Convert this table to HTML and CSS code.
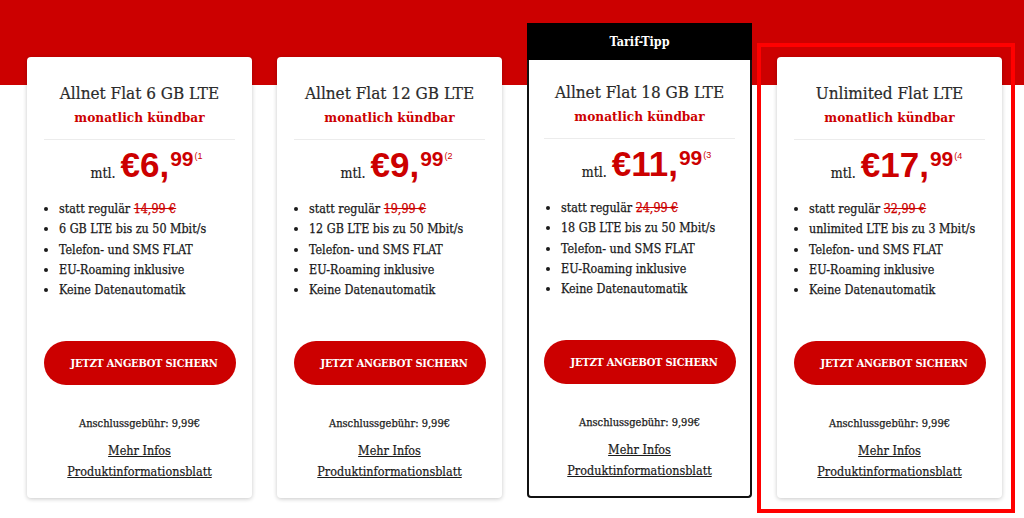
FILE: index.html
```html
<!DOCTYPE html>
<html lang="de">
<head>
<meta charset="utf-8">
<title>Tarife</title>
<link rel="stylesheet" href="styles.css">
</head>
<body>
<div class="page">
  <div class="row">
    <div class="col">
      <div class="card">
        <h2 class="title">Allnet Flat 6 GB LTE</h2>
        <div class="sub">monatlich kündbar</div>
        <div class="sep"></div>
        <div class="price"><span class="mtl">mtl.</span><span class="big">€6,</span><span class="cents">99</span><span class="note">(1</span></div>
        <ul class="feat">
          <li>statt regulär <s>14,99 €</s></li>
          <li>6 GB LTE bis zu 50 Mbit/s</li>
          <li>Telefon- und SMS FLAT</li>
          <li>EU-Roaming inklusive</li>
          <li>Keine Datenautomatik</li>
        </ul>
        <a class="btn">JETZT ANGEBOT SICHERN</a>
        <div class="fee">Anschlussgebühr: 9,99€</div>
        <a class="link link-first">Mehr Infos</a>
        <a class="link">Produktinformationsblatt</a>
      </div>
    </div>
    <div class="col">
      <div class="card">
        <h2 class="title">Allnet Flat 12 GB LTE</h2>
        <div class="sub">monatlich kündbar</div>
        <div class="sep"></div>
        <div class="price"><span class="mtl">mtl.</span><span class="big">€9,</span><span class="cents">99</span><span class="note">(2</span></div>
        <ul class="feat">
          <li>statt regulär <s>19,99 €</s></li>
          <li>12 GB LTE bis zu 50 Mbit/s</li>
          <li>Telefon- und SMS FLAT</li>
          <li>EU-Roaming inklusive</li>
          <li>Keine Datenautomatik</li>
        </ul>
        <a class="btn">JETZT ANGEBOT SICHERN</a>
        <div class="fee">Anschlussgebühr: 9,99€</div>
        <a class="link link-first">Mehr Infos</a>
        <a class="link">Produktinformationsblatt</a>
      </div>
    </div>
    <div class="col">
      <div class="tip">Tarif-Tipp</div>
      <div class="card card-tip">
        <h2 class="title">Allnet Flat 18 GB LTE</h2>
        <div class="sub">monatlich kündbar</div>
        <div class="sep"></div>
        <div class="price"><span class="mtl">mtl.</span><span class="big">€11,</span><span class="cents">99</span><span class="note">(3</span></div>
        <ul class="feat">
          <li>statt regulär <s>24,99 €</s></li>
          <li>18 GB LTE bis zu 50 Mbit/s</li>
          <li>Telefon- und SMS FLAT</li>
          <li>EU-Roaming inklusive</li>
          <li>Keine Datenautomatik</li>
        </ul>
        <a class="btn">JETZT ANGEBOT SICHERN</a>
        <div class="fee">Anschlussgebühr: 9,99€</div>
        <a class="link link-first">Mehr Infos</a>
        <a class="link">Produktinformationsblatt</a>
      </div>
    </div>
    <div class="col col-marked">
      <div class="card">
        <h2 class="title">Unlimited Flat LTE</h2>
        <div class="sub">monatlich kündbar</div>
        <div class="sep"></div>
        <div class="price"><span class="mtl">mtl.</span><span class="big">€17,</span><span class="cents">99</span><span class="note">(4</span></div>
        <ul class="feat">
          <li>statt regulär <s>32,99 €</s></li>
          <li>unlimited LTE bis zu 3 Mbit/s</li>
          <li>Telefon- und SMS FLAT</li>
          <li>EU-Roaming inklusive</li>
          <li>Keine Datenautomatik</li>
        </ul>
        <a class="btn">JETZT ANGEBOT SICHERN</a>
        <div class="fee">Anschlussgebühr: 9,99€</div>
        <a class="link link-first">Mehr Infos</a>
        <a class="link">Produktinformationsblatt</a>
      </div>
    </div>
  </div>
</div>
</body>
</html>
```

FILE: styles.css
```css
* { box-sizing: border-box; }
html, body { margin: 0; padding: 0; }
body {
  width: 1024px;
  height: 518px;
  overflow: hidden;
  background: linear-gradient(#cc0000 0, #cc0000 85px, #ffffff 85px);
  font-family: "DejaVu Serif Condensed", "Liberation Serif", serif;
  color: #222;
}
.page { padding: 23px 0 0 27px; }
.row {
  display: flex;
  align-items: flex-end;
  gap: 25px;
  height: 475px;
}
.col {
  width: 225px;
  display: flex;
  flex-direction: column;
  position: relative;
}
.col-marked::after {
  content: "";
  position: absolute;
  left: -20px; right: -13px; top: -14px; bottom: -15px;
  border: 4px solid #ff0000;
  pointer-events: none;
}
.card {
  height: 441px;
  background: #fff;
  border-radius: 4px;
  box-shadow: 0 1px 4px rgba(0,0,0,0.22);
  display: flex;
  flex-direction: column;
  align-items: center;
  padding: 24px 16px 0;
}
.card-tip {
  height: 438px;
  border: 2px solid #111;
  border-top: none;
  border-radius: 0 0 4px 4px;
  padding-top: 20px;
  box-shadow: none;
}
.tip {
  height: 37px;
  background: #000;
  color: #fff;
  font-weight: bold;
  font-size: 12.5px;
  display: flex;
  align-items: center;
  justify-content: center;
}
.title {
  margin: 0;
  font-size: 17px;
  font-weight: normal;
  line-height: 24px;
  color: #2b2b2b;
  white-space: nowrap;
  -webkit-text-stroke: 0.2px #2b2b2b;
}
.sub {
  font-size: 13.5px;
  font-weight: bold;
  line-height: 24px;
  color: #cc0000;
}
.sep {
  width: 191px;
  height: 1px;
  background: #ececec;
  margin-top: 10px;
}
.price {
  display: flex;
  align-items: flex-start;
  height: 46px;
  margin-top: 5px;
  margin-left: 14px;
  color: #cc0000;
  font-family: "Liberation Sans", Arial, sans-serif;
  font-weight: bold;
}
.mtl {
  font-family: "DejaVu Serif Condensed", "Liberation Serif", serif;
  font-weight: normal;
  color: #1a1a1a;
  font-size: 14px;
  line-height: 16px;
  margin-top: 20px;
  margin-right: 5px;
  -webkit-text-stroke: 0.2px #1a1a1a;
}
.big { font-size: 35px; line-height: 40px; }
.cents { font-size: 21px; line-height: 20px; margin-top: 4px; margin-left: 1px; }
.note { font-size: 9px; line-height: 10px; font-weight: normal; margin-top: 6px; margin-left: 1px; }
.feat {
  align-self: stretch;
  margin: 8px 0 0 0;
  padding: 0 0 0 16px;
  font-size: 12.4px;
  line-height: 20.3px;
  height: 130px;
  color: #1a1a1a;
  -webkit-text-stroke: 0.25px #1a1a1a;
}
.feat li { white-space: nowrap; }
.feat s { color: #cc0000; -webkit-text-stroke: 0.25px #cc0000; }
.btn {
  width: 192px;
  height: 44px;
  border-radius: 22px;
  background: #cc0000;
  color: #fff;
  font-weight: bold;
  font-size: 11px;
  letter-spacing: -0.25px;
  display: flex;
  align-items: center;
  justify-content: center;
  padding-left: 9px;
  margin-top: 12px;
}
.fee {
  margin-top: 31px;
  font-size: 11px;
  line-height: 16px;
  color: #1a1a1a;
  -webkit-text-stroke: 0.25px #1a1a1a;
}
.link {
  font-size: 12.5px;
  line-height: 21px;
  color: #1a1a1a;
  text-decoration: underline;
  -webkit-text-stroke: 0.2px #1a1a1a;
}
.link-first { margin-top: 8px; }
```
